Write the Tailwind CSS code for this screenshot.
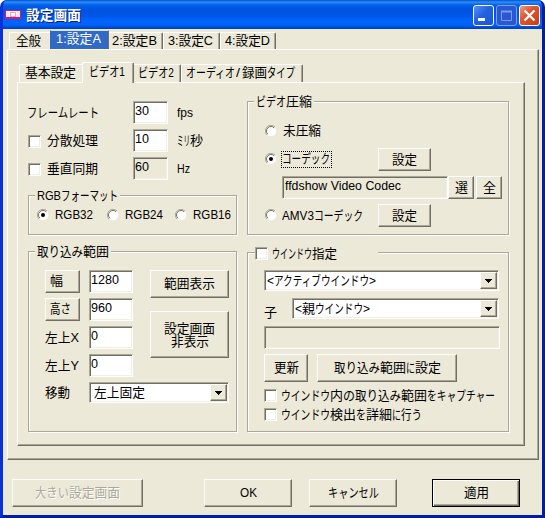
<!DOCTYPE html>
<html lang="ja">
<head>
<meta charset="utf-8">
<title>設定画面</title>
<script src="https://cdn.jsdelivr.net/npm/@tailwindcss/browser@4"></script>
</head>
<body class="w-[545px] h-[518px] overflow-hidden bg-white text-black text-[13px] leading-[16px] font-['Liberation_Sans','Noto_Sans_CJK_JP',sans-serif] select-none">
<svg class="hidden">
  <symbol id="radio" viewBox="0 0 12 12"><circle cx="6" cy="6" r="5.3" fill="#fff"/><path d="M2 10A5.5 5.5 0 0 1 10 2" fill="none" stroke="#aca899"/><path d="M2.8 9.2A4.5 4.5 0 0 1 9.2 2.8" fill="none" stroke="#716f64"/></symbol>
  <symbol id="arrow" viewBox="0 0 7 4"><path d="M0 0h7v1H6v1H5v1H4v1H3V3H2V2H1V1H0z" fill="#000"/></symbol>
</svg>
<div class="w-[545px] h-[518px] flex flex-col rounded-t-[7px] bg-[#0046e0] border-x-3 border-b-3 border-l-[#0831d9] border-r-[#001ea0] border-b-[#001ea0] overflow-hidden">
  <header class="h-[29px] shrink-0 -mx-[3px] pl-[5px] pr-[5px] flex items-center bg-[linear-gradient(#0050c8_0px,#2f8cff_2px,#0062e8_5px,#0054e3_9px,#0055e5_15px,#0066ff_22px,#0062f8_25px,#0045c8_28px,#0040c0_29px)]">
    <svg class="w-4 h-[9px]" viewBox="0 0 16 9" shape-rendering="crispEdges"><path d="M0 0h16v9H0z" fill="#d8186c"/><path d="M1 1h14v6H1z" fill="#fff"/><path d="M1 2h3v5H1zM12 2h3v5h-3z" fill="#fbdfe9"/><path d="M5 2h6v5H5z" fill="#f4a0c4"/><path d="M6 3h4v3H6z" fill="#fff"/></svg>
    <span class="ml-[5px] text-white text-[14px] font-bold inline-block origin-left whitespace-nowrap [text-shadow:1px_1px_0_#002080]" data-w="51">設定画面</span>
    <div class="ml-auto flex gap-[2px] mt-[2px]">
      <svg class="w-[21px] h-[21px]" viewBox="0 0 21 21"><defs><linearGradient id="b" x2="1" y2="1"><stop stop-color="#5d93f5"/><stop offset=".45" stop-color="#2461dd"/><stop offset="1" stop-color="#1a55e0"/></linearGradient><linearGradient id="r" x2="1" y2="1"><stop stop-color="#f0a088"/><stop offset=".4" stop-color="#e1542f"/><stop offset="1" stop-color="#c93c10"/></linearGradient></defs><rect x=".5" y=".5" width="20" height="20" rx="2.5" fill="url(#b)" stroke="#fff"/><path d="M5 13h7v3H5z" fill="#fff"/></svg>
      <svg class="w-[21px] h-[21px]" viewBox="0 0 21 21"><rect x=".5" y=".5" width="20" height="20" rx="2.5" fill="#2858d4" stroke="#7ca0ee"/><path d="M5.5 6.5h10v9h-10zM5 6h11M5 7h11" fill="none" stroke="#7d9be8"/></svg>
      <svg class="w-[21px] h-[21px]" viewBox="0 0 21 21"><rect x=".5" y=".5" width="20" height="20" rx="2.5" fill="url(#r)" stroke="#fff"/><path d="M5.5 5.5l10 10M15.500 5.500l-10 10" stroke="#fff" stroke-width="2.300"/></svg>
    </div>
  </header>

  <main class="flex-1 bg-[#ece9d8] pl-[4px] flex flex-col items-start">
    <nav class="h-[20px] mt-px pl-[2px] flex items-end">
      <div class="w-[41px] h-[18px] border-t border-l border-white rounded-tl-[2px] pl-[6px]"><span class="inline-block origin-left whitespace-nowrap" data-w="25">全般</span></div>
      <div class="w-[59px] h-[20px] bg-[#316ac5] text-white border-t border-l border-t-[#d8e4f4] border-l-[#316ac5] border-r border-r-[#716f64] pl-[5px]"><span class="inline-block origin-left whitespace-nowrap" data-w="45">1:設定A</span></div>
      <div class="w-[54px] h-[18px] border-t border-white border-r border-r-[#716f64] rounded-tr-[2px] pl-[3px] shadow-[inset_-1px_0_0_#aca899]"><span class="inline-block origin-left whitespace-nowrap" data-w="45">2:設定B</span></div>
      <div class="w-[57px] h-[18px] border-t border-l border-white border-r border-r-[#716f64] rounded-t-[2px] pl-[4px] shadow-[inset_-1px_0_0_#aca899]"><span class="inline-block origin-left whitespace-nowrap" data-w="45">3:設定C</span></div>
      <div class="w-[56px] h-[18px] border-t border-l border-white border-r border-r-[#716f64] rounded-t-[2px] pl-[4px] shadow-[inset_-1px_0_0_#aca899]"><span class="inline-block origin-left whitespace-nowrap" data-w="45">4:設定D</span></div>
    </nav>

    <section class="w-[532px] h-[411px] -mt-px border-t border-l border-white border-r border-b border-r-[#716f64] border-b-[#716f64] shadow-[inset_-1px_-1px_0_#aca899] pl-[9px] pt-[12px]">
      <nav class="h-[20px] pl-[2px] flex items-end">
        <div class="w-[63px] h-[18px] border-t border-l border-white rounded-tl-[2px] pl-[5px]"><span class="inline-block origin-left whitespace-nowrap" data-w="51">基本設定</span></div>
        <div class="w-[52px] h-[21px] -mb-px relative z-1 bg-[#ece9d8] border-t border-l border-white border-r border-r-[#716f64] rounded-t-[2px] pl-[6px] pt-px shadow-[inset_-1px_0_0_#aca899]"><span class="inline-block origin-left whitespace-nowrap" data-w="36">ビデオ1</span></div>
        <div class="w-[47px] h-[18px] border-t border-white border-r border-r-[#716f64] rounded-tr-[2px] pl-[4px] shadow-[inset_-1px_0_0_#aca899]"><span class="inline-block origin-left whitespace-nowrap" data-w="36">ビデオ2</span></div>
        <div class="w-[122px] h-[18px] border-t border-l border-white border-r border-r-[#716f64] rounded-t-[2px] pl-[4px] shadow-[inset_-1px_0_0_#aca899] flex"><span class="inline-block origin-left whitespace-nowrap" data-w="49">オーディオ</span><span class="ml-px mr-[2px] inline-block origin-left whitespace-nowrap" data-w="4">/</span><span class="inline-block origin-left whitespace-nowrap" data-w="25">録画</span><span class="inline-block origin-left whitespace-nowrap" data-w="28">タイプ</span></div>
      </nav>

      <div class="w-[508px] h-[364px] border-t border-l border-white border-r border-b border-r-[#716f64] border-b-[#716f64] shadow-[inset_-1px_-1px_0_#aca899] pl-[10px] pt-[18px] flex gap-[10px]">
        <!-- left column -->
        <div class="w-[209px] flex flex-col">
          <div class="h-[23px] mb-[5px] flex items-center">
            <div class="w-[105px] -ml-px"><span class="inline-block origin-left whitespace-nowrap" data-w="72">フレームレート</span></div>
            <div class="w-[35px] h-[23px] ml-px bg-white border border-[#aca899] border-r-white border-b-white shadow-[inset_1px_1px_0_#716f64,inset_-1px_-1px_0_#f1efe2] pl-[1px] pt-px"><span class="inline-block origin-left whitespace-nowrap" data-w="14">30</span></div>
            <span class="ml-[9px] inline-block origin-left whitespace-nowrap" data-w="16">fps</span>
          </div>
          <div class="h-[23px] mb-[5px] flex items-center">
            <i class="w-[13px] h-[13px] mt-[2px] bg-white border border-[#aca899] border-r-white border-b-white shadow-[inset_1px_1px_0_#716f64,inset_-1px_-1px_0_#f1efe2]"></i>
            <div class="w-[86px] ml-[6px]"><span class="inline-block origin-left whitespace-nowrap" data-w="51">分散処理</span></div>
            <div class="w-[35px] h-[23px] bg-white border border-[#aca899] border-r-white border-b-white shadow-[inset_1px_1px_0_#716f64,inset_-1px_-1px_0_#f1efe2] pl-[1px] pt-px"><span class="inline-block origin-left whitespace-nowrap" data-w="14">10</span></div>
            <span class="ml-[9px] inline-block origin-left whitespace-nowrap" data-w="13">ミリ</span><span class="inline-block origin-left whitespace-nowrap" data-w="13">秒</span>
          </div>
          <div class="h-[23px] flex items-center">
            <i class="w-[13px] h-[13px] mt-[2px] bg-white border border-[#aca899] border-r-white border-b-white shadow-[inset_1px_1px_0_#716f64,inset_-1px_-1px_0_#f1efe2]"></i>
            <div class="w-[86px] ml-[6px]"><span class="inline-block origin-left whitespace-nowrap" data-w="51">垂直同期</span></div>
            <div class="w-[35px] h-[23px] border border-[#aca899] border-r-white border-b-white shadow-[inset_1px_1px_0_#716f64,inset_-1px_-1px_0_#f1efe2] pl-[1px] pt-px"><span class="inline-block origin-left whitespace-nowrap" data-w="14">60</span></div>
            <span class="ml-[9px] inline-block origin-left whitespace-nowrap" data-w="13">Hz</span>
          </div>

          <div class="relative mt-[15px] h-[40px] border border-[#aca899] shadow-[1px_1px_0_#fff,inset_1px_1px_0_#fff] pl-[8px] pt-[11px] flex items-start">
            <div class="absolute left-[6px] -top-[8px] w-[85px] h-4 bg-[#ece9d8] flex pl-[2px]"><span class="inline-block origin-left whitespace-nowrap" data-w="24">RGB</span><span class="inline-block origin-left whitespace-nowrap" data-w="57">フォーマット</span></div>
            <div class="w-[70px] flex"><svg class="w-3 h-3 mt-[2px] mr-[6px]"><use href="#radio"/><circle cx="6" cy="6" r="2" /></svg><span class="inline-block origin-left whitespace-nowrap" data-w="38">RGB32</span></div>
            <div class="w-[68px] flex"><svg class="w-3 h-3 mt-[2px] mr-[6px]"><use href="#radio"/></svg><span class="inline-block origin-left whitespace-nowrap" data-w="38">RGB24</span></div>
            <div class="flex"><svg class="w-3 h-3 mt-[2px] mr-[6px]"><use href="#radio"/></svg><span class="inline-block origin-left whitespace-nowrap" data-w="38">RGB16</span></div>
          </div>

          <div class="relative mt-[16px] h-[181px] border border-[#aca899] shadow-[1px_1px_0_#fff,inset_1px_1px_0_#fff] pl-[16px] pt-[18px]">
            <div class="absolute left-[6px] -top-[8px] w-[76px] h-4 bg-[#ece9d8] flex pl-[2px]"><span class="inline-block origin-left whitespace-nowrap" data-w="46">取り込み</span><span class="inline-block origin-left whitespace-nowrap" data-w="26">範囲</span></div>
            <div class="flex">
              <div class="w-[44px] flex flex-col gap-[5px]">
                <div class="w-[35px] h-[23px] border border-white border-r-[#716f64] border-b-[#716f64] shadow-[inset_-1px_-1px_0_#aca899] pl-[4px] pt-[2px]"><span class="inline-block origin-left whitespace-nowrap" data-w="13">幅</span></div>
                <div class="w-[35px] h-[23px] border border-white border-r-[#716f64] border-b-[#716f64] shadow-[inset_-1px_-1px_0_#aca899] pl-[4px] pt-[2px]"><span class="inline-block origin-left whitespace-nowrap" data-w="21">高さ</span></div>
                <div class="h-[23px] flex items-center"><span class="inline-block origin-left whitespace-nowrap" data-w="34">左上X</span></div>
                <div class="h-[23px] flex items-center"><span class="inline-block origin-left whitespace-nowrap" data-w="34">左上Y</span></div>
              </div>
              <div class="w-[44px] flex flex-col gap-[5px]">
                <div class="h-[23px] bg-white border border-[#aca899] border-r-white border-b-white shadow-[inset_1px_1px_0_#716f64,inset_-1px_-1px_0_#f1efe2] pl-[1px] pt-px"><span class="inline-block origin-left whitespace-nowrap" data-w="28">1280</span></div>
                <div class="h-[23px] bg-white border border-[#aca899] border-r-white border-b-white shadow-[inset_1px_1px_0_#716f64,inset_-1px_-1px_0_#f1efe2] pl-[1px] pt-px"><span class="inline-block origin-left whitespace-nowrap" data-w="21">960</span></div>
                <div class="h-[23px] bg-white border border-[#aca899] border-r-white border-b-white shadow-[inset_1px_1px_0_#716f64,inset_-1px_-1px_0_#f1efe2] pl-[1px] pt-px"><span class="inline-block origin-left whitespace-nowrap" data-w="7">0</span></div>
                <div class="h-[23px] bg-white border border-[#aca899] border-r-white border-b-white shadow-[inset_1px_1px_0_#716f64,inset_-1px_-1px_0_#f1efe2] pl-[1px] pt-px"><span class="inline-block origin-left whitespace-nowrap" data-w="7">0</span></div>
              </div>
              <div class="ml-[17px] w-[79px] flex flex-col gap-[13px]">
                <div class="h-[28px] border border-white border-r-[#716f64] border-b-[#716f64] shadow-[inset_-1px_-1px_0_#aca899] flex justify-center items-center"><span class="inline-block origin-left whitespace-nowrap" data-w="51">範囲表示</span></div>
                <div class="h-[47px] border border-white border-r-[#716f64] border-b-[#716f64] shadow-[inset_-1px_-1px_0_#aca899] flex flex-col justify-center items-center leading-[13px]"><span class="inline-block origin-left whitespace-nowrap" data-w="51">設定画面</span><span class="inline-block origin-left whitespace-nowrap" data-w="38">非表示</span></div>
              </div>
            </div>
            <div class="mt-[5px] flex items-center">
              <div class="w-[44px]"><span class="inline-block origin-left whitespace-nowrap" data-w="25">移動</span></div>
              <div class="w-[140px] h-[21px] bg-white border border-[#aca899] border-r-white border-b-white shadow-[inset_1px_1px_0_#716f64,inset_-1px_-1px_0_#f1efe2] pl-[4px] pr-px flex items-center justify-between"><span class="inline-block origin-left whitespace-nowrap" data-w="51">左上固定</span><i class="w-[17px] h-[17px] bg-[#ece9d8] border border-white border-r-[#716f64] border-b-[#716f64] shadow-[inset_-1px_-1px_0_#aca899] flex items-center justify-center"><svg class="w-[7px] h-[4px]"><use href="#arrow"/></svg></i></div>
            </div>
          </div>
        </div>

        <!-- right column -->
        <div class="w-[262px] flex flex-col">
          <div class="relative h-[134px] border border-[#aca899] shadow-[1px_1px_0_#fff,inset_1px_1px_0_#fff] pl-[17px] pt-[18px]">
            <div class="absolute left-[6px] -top-[8px] w-[60px] h-4 bg-[#ece9d8] flex pl-[2px]"><span class="inline-block origin-left whitespace-nowrap" data-w="30">ビデオ</span><span class="inline-block origin-left whitespace-nowrap" data-w="26">圧縮</span></div>
            <div class="h-[23px] -mt-px flex items-center"><svg class="w-3 h-3 mr-[6px]"><use href="#radio"/></svg><span class="inline-block origin-left whitespace-nowrap" data-w="38">未圧縮</span></div>
            <div class="h-[23px] mt-[6px] flex items-center">
              <svg class="w-3 h-3 mr-[4px] -mt-[2px]"><use href="#radio"/><circle cx="6" cy="6" r="2"/></svg>
              <div class="w-[51px] h-[17px] mr-[46px] -mt-px border border-dotted border-black flex items-center"><span class="inline-block origin-left whitespace-nowrap" data-w="48">コーデック</span></div>
              <div class="w-[53px] h-[23px] border border-white border-r-[#716f64] border-b-[#716f64] shadow-[inset_-1px_-1px_0_#aca899] flex justify-center items-center"><span class="inline-block origin-left whitespace-nowrap" data-w="25">設定</span></div>
            </div>
            <div class="h-[23px] mt-[5px] pl-[17px] flex">
              <div class="w-[166px] h-[23px] border border-[#aca899] border-r-white border-b-white shadow-[inset_1px_1px_0_#716f64,inset_-1px_-1px_0_#f1efe2] pl-[2px] pt-px"><span class="inline-block origin-left whitespace-nowrap" data-w="116">ffdshow Video Codec</span></div>
              <div class="w-[26px] h-[23px] border border-white border-r-[#716f64] border-b-[#716f64] shadow-[inset_-1px_-1px_0_#aca899] flex justify-center items-center"><span class="inline-block origin-left whitespace-nowrap" data-w="13">選</span></div>
              <div class="w-[26px] h-[23px] ml-[2px] border border-white border-r-[#716f64] border-b-[#716f64] shadow-[inset_-1px_-1px_0_#aca899] flex justify-center items-center"><span class="inline-block origin-left whitespace-nowrap" data-w="13">全</span></div>
            </div>
            <div class="h-[23px] mt-[5px] flex items-center">
              <svg class="w-3 h-3 mr-[5px] -mt-[2px]"><use href="#radio"/></svg>
              <div class="w-[96px] flex"><span class="inline-block origin-left whitespace-nowrap" data-w="32">AMV3</span><span class="inline-block origin-left whitespace-nowrap" data-w="49">コーデック</span></div>
              <div class="w-[53px] h-[23px] border border-white border-r-[#716f64] border-b-[#716f64] shadow-[inset_-1px_-1px_0_#aca899] flex justify-center items-center"><span class="inline-block origin-left whitespace-nowrap" data-w="25">設定</span></div>
            </div>
          </div>

          <div class="relative mt-[17px] h-[180px] border border-[#aca899] shadow-[1px_1px_0_#fff,inset_1px_1px_0_#fff] pl-[16px] pt-[17px]">
            <div class="absolute left-[7px] -top-[6px] w-[123px] h-4 bg-[#ece9d8] flex items-start"><i class="w-[13px] h-[13px] mr-[4px] bg-white border border-[#aca899] border-r-white border-b-white shadow-[inset_1px_1px_0_#716f64,inset_-1px_-1px_0_#f1efe2]"></i><span class="-mt-px inline-block origin-left whitespace-nowrap" data-w="40">ウインドウ</span><span class="-mt-px inline-block origin-left whitespace-nowrap" data-w="25">指定</span></div>
            <div class="w-[235px] h-[21px] bg-white border border-[#aca899] border-r-white border-b-white shadow-[inset_1px_1px_0_#716f64,inset_-1px_-1px_0_#f1efe2] pl-[2px] pr-px flex items-center"><span class="inline-block origin-left whitespace-nowrap" data-w="7">&lt;</span><span class="inline-block origin-left whitespace-nowrap" data-w="95">アクティブウインドウ</span><span class="inline-block origin-left whitespace-nowrap" data-w="7">&gt;</span><i class="ml-auto w-[17px] h-[17px] bg-[#ece9d8] border border-white border-r-[#716f64] border-b-[#716f64] shadow-[inset_-1px_-1px_0_#aca899] flex items-center justify-center"><svg class="w-[7px] h-[4px]"><use href="#arrow"/></svg></i></div>
            <div class="mt-[7px] flex">
              <div class="w-[28px] h-[21px] pt-[7px]"><span class="inline-block origin-left whitespace-nowrap" data-w="13">子</span></div>
              <div class="w-[207px] h-[21px] bg-white border border-[#aca899] border-r-white border-b-white shadow-[inset_1px_1px_0_#716f64,inset_-1px_-1px_0_#f1efe2] pl-[2px] pr-px flex items-center"><span class="inline-block origin-left whitespace-nowrap" data-w="7">&lt;</span><span class="inline-block origin-left whitespace-nowrap" data-w="13">親</span><span class="inline-block origin-left whitespace-nowrap" data-w="48">ウインドウ</span><span class="inline-block origin-left whitespace-nowrap" data-w="7">&gt;</span><i class="ml-auto w-[17px] h-[17px] bg-[#ece9d8] border border-white border-r-[#716f64] border-b-[#716f64] shadow-[inset_-1px_-1px_0_#aca899] flex items-center justify-center"><svg class="w-[7px] h-[4px]"><use href="#arrow"/></svg></i></div>
            </div>
            <div class="mt-[7px] w-[236px] h-[23px] border border-[#aca899] border-r-white border-b-white shadow-[inset_1px_1px_0_#716f64,inset_-1px_-1px_0_#f1efe2]"></div>
            <div class="mt-[5px] flex gap-[9px]">
              <div class="w-[44px] h-[28px] border border-white border-r-[#716f64] border-b-[#716f64] shadow-[inset_-1px_-1px_0_#aca899] flex justify-center items-center"><span class="inline-block origin-left whitespace-nowrap" data-w="25">更新</span></div>
              <div class="w-[140px] h-[28px] border border-white border-r-[#716f64] border-b-[#716f64] shadow-[inset_-1px_-1px_0_#aca899] flex justify-center items-center"><span class="inline-block origin-left whitespace-nowrap" data-w="46">取り込み</span><span class="inline-block origin-left whitespace-nowrap" data-w="26">範囲</span><span class="inline-block origin-left whitespace-nowrap" data-w="9">に</span><span class="inline-block origin-left whitespace-nowrap" data-w="26">設定</span></div>
            </div>
            <div class="mt-[4px] h-[19px] flex items-center"><i class="w-[13px] h-[13px] mr-[4px] bg-white border border-[#aca899] border-r-white border-b-white shadow-[inset_1px_1px_0_#716f64,inset_-1px_-1px_0_#f1efe2]"></i><span class="inline-block origin-left whitespace-nowrap" data-w="49">ウインドウ</span><span class="inline-block origin-left whitespace-nowrap" data-w="13">内</span><span class="inline-block origin-left whitespace-nowrap" data-w="12">の</span><span class="inline-block origin-left whitespace-nowrap" data-w="46">取り込み</span><span class="inline-block origin-left whitespace-nowrap" data-w="26">範囲</span><span class="inline-block origin-left whitespace-nowrap" data-w="68">をキャプチャー</span></div>
            <div class="h-[19px] flex items-center"><i class="w-[13px] h-[13px] mr-[4px] bg-white border border-[#aca899] border-r-white border-b-white shadow-[inset_1px_1px_0_#716f64,inset_-1px_-1px_0_#f1efe2]"></i><span class="inline-block origin-left whitespace-nowrap" data-w="49">ウインドウ</span><span class="inline-block origin-left whitespace-nowrap" data-w="26">検出</span><span class="inline-block origin-left whitespace-nowrap" data-w="10">を</span><span class="inline-block origin-left whitespace-nowrap" data-w="26">詳細</span><span class="inline-block origin-left whitespace-nowrap" data-w="9">に</span><span class="inline-block origin-left whitespace-nowrap" data-w="21">行う</span></div>
          </div>
        </div>
      </div>
    </section>

    <footer class="mt-[19px] pl-[5px] flex">
      <div class="w-[131px] h-[28px] border border-white border-r-[#716f64] border-b-[#716f64] shadow-[inset_-1px_-1px_0_#aca899] flex justify-center items-center text-[#aca899] [text-shadow:1px_1px_0_#fff]"><span class="inline-block origin-left whitespace-nowrap" data-w="34">大きい</span><span class="inline-block origin-left whitespace-nowrap" data-w="51">設定画面</span></div>
      <div class="ml-[61px] w-[88px] h-[28px] border border-white border-r-[#716f64] border-b-[#716f64] shadow-[inset_-1px_-1px_0_#aca899] flex justify-center items-center"><span class="inline-block origin-left whitespace-nowrap" data-w="17">OK</span></div>
      <div class="ml-[17px] w-[88px] h-[28px] border border-white border-r-[#716f64] border-b-[#716f64] shadow-[inset_-1px_-1px_0_#aca899] flex justify-center items-center"><span class="inline-block origin-left whitespace-nowrap" data-w="51">キャンセル</span></div>
      <div class="ml-[35px] w-[88px] h-[28px] border border-black shadow-[inset_1px_1px_0_#fff,inset_-1px_-1px_0_#716f64,inset_-2px_-2px_0_#aca899] flex justify-center items-center"><span class="inline-block origin-left whitespace-nowrap" data-w="25">適用</span></div>
    </footer>
  </main>
</div>
<script>
  // Condense each label horizontally to its dialog width, measured at the 13px dialog font.
  const probe = document.createElement('span');
  probe.style.cssText = 'position:absolute;visibility:hidden;white-space:nowrap;font:13px "Liberation Sans","Noto Sans CJK JP",sans-serif';
  document.body.append(probe);
  document.querySelectorAll('[data-w]').forEach(el => {
    probe.textContent = el.textContent;
    const w = +el.dataset.w, natural = probe.getBoundingClientRect().width;
    el.style.width = w + 'px';
    el.style.flexShrink = 0;
    el.style.transform = 'scaleX(' + w / natural + ')';
    el.style.transformOrigin = '0 50%';
  });
  probe.remove();
</script>
</body>
</html>
